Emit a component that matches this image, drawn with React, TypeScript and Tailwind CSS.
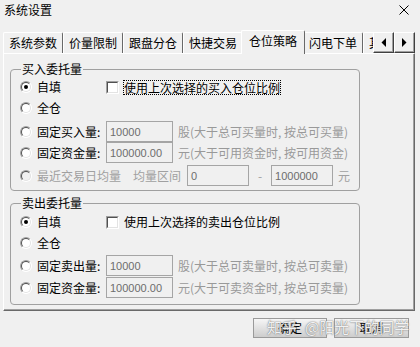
import React from "react";

const Radio = ({ checked = false, disabled = false }: { checked?: boolean; disabled?: boolean }) => (
  <span
    className={`relative inline-block shrink-0 w-[12px] h-[12px] rounded-full border border-t-[#a0a0a0] border-l-[#a0a0a0] border-b-white border-r-white ${
      disabled ? "bg-[#f0f0f0]" : "bg-white"
    }`}
  >
    <span className="absolute inset-0 rounded-full border border-t-[#505050] border-l-[#505050] border-b-[#e3e3e3] border-r-[#e3e3e3]" />
    {checked && <span className="absolute left-[3px] top-[3px] w-[4px] h-[4px] rounded-full bg-black" />}
  </span>
);

const Check = () => (
  <span className="relative inline-block shrink-0 w-[13px] h-[13px] bg-white border border-t-[#a0a0a0] border-l-[#a0a0a0] border-b-white border-r-white">
    <span className="absolute inset-0 border border-t-[#505050] border-l-[#505050] border-b-[#e3e3e3] border-r-[#e3e3e3]" />
  </span>
);

const Field = ({ w, children }: { w: string; children: React.ReactNode }) => (
  <div
    className={`${w} shrink-0 h-[21px] border border-[#a5a5a5] bg-[#f0f0f0] text-[#6d6d6d] pl-[3px] flex items-center text-[11px] font-['Liberation_Sans',sans-serif]`}
  >
    {children}
  </div>
);

const Tab = ({ label }: { label: string }) => (
  <div className="shrink-0 w-[60px] h-[21px] mb-[1px] flex items-center justify-center border-l border-t border-r border-l-white border-t-white border-r-[#696969] rounded-t-[2px]">
    {label}
  </div>
);

const Arrow = ({ left }: { left?: boolean }) => (
  <div className="w-[21px] h-[21px] border border-t-white border-l-white border-b-[#404040] border-r-[#404040] bg-[#f0f0f0]">
    <div className="w-full h-full flex items-center justify-center border-r border-b border-r-[#a0a0a0] border-b-[#a0a0a0]">
      <svg width="5" height="9" viewBox="0 0 5 9">
        {left ? <path d="M5 0 L0.5 4.5 L5 9 Z" fill="#000" /> : <path d="M0 0 L4.5 4.5 L0 9 Z" fill="#000" />}
      </svg>
    </div>
  </div>
);

export default function App() {
  return (
    <div className="relative w-[420px] h-[347px] overflow-hidden bg-[#f0f0f0] text-[12px] leading-[14px] text-black font-['Noto_Sans_CJK_SC','Noto_Sans',sans-serif]">
      {/* title */}
      <div className="h-[30px]">
        <div className="h-[20px] flex items-center justify-between pl-[4px] pr-[11px]">
          <span>系统设置</span>
          <svg width="10" height="10" viewBox="0 0 10 10">
            <path d="M0.5 0.5 L9.5 9.5 M9.5 0.5 L0.5 9.5" stroke="#000" strokeWidth="1" />
          </svg>
        </div>
      </div>

      {/* tabs */}
      <div className="relative z-10 ml-[3px] w-[412px] h-[24px] flex items-end">
        <div className="flex-1 h-full flex items-end overflow-hidden">
          <Tab label="系统参数" />
          <Tab label="价量限制" />
          <Tab label="跟盘分仓" />
          <Tab label="快捷交易" />
          <div className="relative z-[1] shrink-0 -mx-[2px] w-[64px] h-[24px] pb-[4px] flex items-center justify-center bg-[#f0f0f0] border-l border-t border-r border-l-white border-t-white border-r-[#696969] rounded-t-[2px]">
            仓位策略
          </div>
          <Tab label="闪电下单" />
          <Tab label="其他设置" />
        </div>
        <div className="flex shrink-0 mb-[1px]">
          <Arrow left />
          <Arrow />
        </div>
      </div>

      {/* panel */}
      <div className="relative -mt-[1px] ml-[3px] w-[412px] h-[258px] border border-t-white border-l-white border-r-[#696969] border-b-[#696969]">
        <div className="h-full border-r border-b border-r-[#a0a0a0] border-b-[#a0a0a0] pl-[6px] pt-[8px]">
          {/* buy group */}
          <fieldset className="w-[350px] border border-[#a0a0a0] rounded-[4px]">
            <legend className="ml-[10px] px-[1px] leading-[14px]">买入委托量</legend>
            <div className="pl-[9px] pb-[4px] flex flex-col">
              <div className="mt-[1px] h-[20px] flex items-center">
                <div className="w-[86px] flex items-center gap-[5px]">
                  <Radio checked />
                  <span>自填</span>
                </div>
                <Check />
                <span className="ml-[4px] border border-dotted border-black leading-[13px]">使用上次选择的买入仓位比例</span>
              </div>
              <div className="h-[21px] flex items-center gap-[5px]">
                <Radio />
                <span>全仓</span>
              </div>
              <div className="mt-[3px] h-[21px] flex items-center">
                <div className="w-[86px] flex items-center gap-[5px]">
                  <Radio />
                  <span>固定买入量:</span>
                </div>
                <Field w="w-[67px]">10000</Field>
                <span className="ml-[5px] text-[#999999]">股(大于总可买量时, 按总可买量)</span>
              </div>
              <div className="h-[21px] flex items-center">
                <div className="w-[86px] flex items-center gap-[5px]">
                  <Radio />
                  <span>固定资金量:</span>
                </div>
                <Field w="w-[67px]">100000.00</Field>
                <span className="ml-[5px] text-[#999999]">元(大于可用资金时, 按可用资金)</span>
              </div>
              <div className="mt-[2px] h-[21px] flex items-center text-[#a0a0a0]">
                <div className="flex items-center gap-[5px]">
                  <Radio disabled />
                  <span>最近交易日均量</span>
                </div>
                <span className="ml-[12px]">均量区间</span>
                <div className="ml-[6px]">
                  <Field w="w-[62px]">0</Field>
                </div>
                <span className="w-[22px] text-center">-</span>
                <Field w="w-[62px]">1000000</Field>
                <span className="ml-[5px]">元</span>
              </div>
            </div>
          </fieldset>

          {/* sell group */}
          <fieldset className="mt-[5px] w-[350px] border border-[#a0a0a0] rounded-[4px]">
            <legend className="ml-[10px] px-[1px] leading-[14px]">卖出委托量</legend>
            <div className="pl-[9px] pb-[6px] flex flex-col">
              <div className="mt-[2px] h-[20px] flex items-center">
                <div className="w-[86px] flex items-center gap-[5px]">
                  <Radio checked />
                  <span>自填</span>
                </div>
                <Check />
                <span className="ml-[5px]">使用上次选择的卖出仓位比例</span>
              </div>
              <div className="h-[21px] flex items-center gap-[5px]">
                <Radio />
                <span>全仓</span>
              </div>
              <div className="mt-[2px] h-[21px] flex items-center">
                <div className="w-[86px] flex items-center gap-[5px]">
                  <Radio />
                  <span>固定卖出量:</span>
                </div>
                <Field w="w-[67px]">10000</Field>
                <span className="ml-[5px] text-[#999999]">股(大于总可卖量时, 按总可卖量)</span>
              </div>
              <div className="mt-[1px] h-[21px] flex items-center">
                <div className="w-[86px] flex items-center gap-[5px]">
                  <Radio />
                  <span>固定资金量:</span>
                </div>
                <Field w="w-[67px]">100000.00</Field>
                <span className="ml-[5px] text-[#999999]">元(大于可卖资金时, 按总可卖量)</span>
              </div>
            </div>
          </fieldset>
        </div>
      </div>

      {/* buttons */}
      <div className="mt-[7px] flex justify-end gap-[7px] pr-[11px]">
        <div className="w-[74px] h-[20px] flex items-center justify-center border border-[#9a9a9a] bg-linear-to-b from-[#f6f6f6] to-[#cdcdcd]">确定</div>
        <div className="w-[75px] h-[20px] flex items-center justify-center border border-[#9a9a9a] bg-linear-to-b from-[#f6f6f6] to-[#cdcdcd]">取消</div>
      </div>

      {/* watermark */}
      <div className="pointer-events-none absolute left-[267px] top-[317px] flex items-center gap-[8px] text-[15px] leading-[20px] text-white/90 [text-shadow:0_0_1px_#666,0_0_2px_#999]">
        <span>知乎</span>
        <span>@阳光下的同学</span>
      </div>
    </div>
  );
}
